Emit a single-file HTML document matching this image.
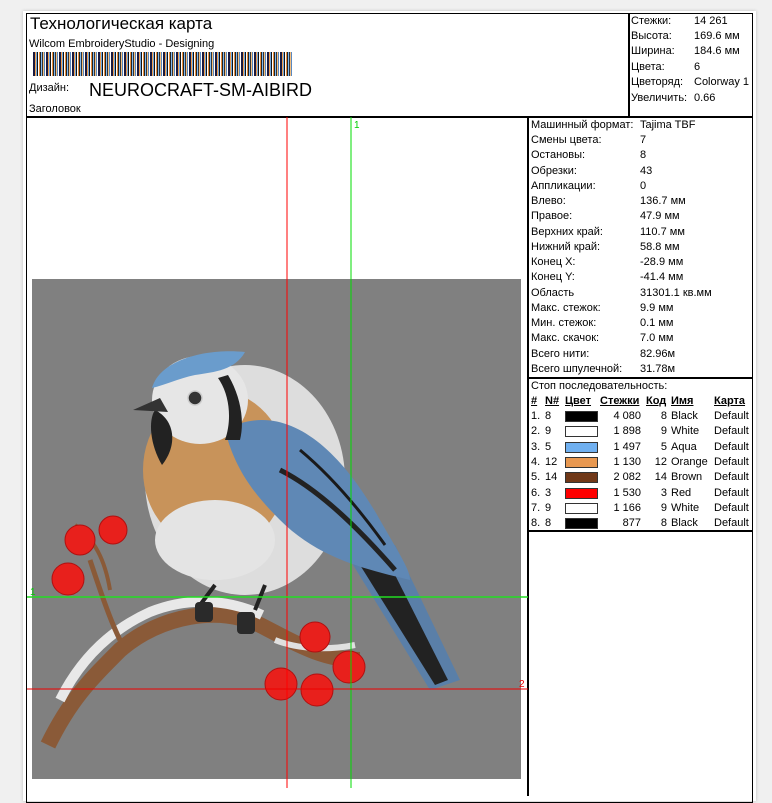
<!DOCTYPE html>
<html><head><meta charset="utf-8"><style>
*{margin:0;padding:0;box-sizing:border-box}
body{width:772px;height:788px;background:#f0f0f0;position:relative;overflow:hidden;font-family:"Liberation Sans",sans-serif;color:#000}
.page{position:absolute;left:23px;top:11px;width:733px;height:790px;background:#fff;box-shadow:0 0 3px #bbb}
.box{position:absolute;border:1.5px solid #000}
.t{position:absolute;font-size:11px;white-space:nowrap;line-height:13px}
.sw{position:absolute;left:565px;width:33px;height:11px;border:1px solid #333}
</style></head><body>
<div class="page"></div>
<div class="box" style="left:26px;top:13px;width:727px;height:790px"></div>
<div style="position:absolute;left:26px;top:116px;width:727px;height:1.5px;background:#000"></div>
<div style="position:absolute;left:628px;top:13px;width:1.5px;height:104px;background:#000"></div>
<div style="position:absolute;left:527px;top:116px;width:1.5px;height:680px;background:#000"></div>
<div style="position:absolute;left:527px;top:377px;width:226px;height:1.5px;background:#000"></div>
<div style="position:absolute;left:527px;top:530px;width:226px;height:1.5px;background:#000"></div>

<div class="t" style="left:30px;top:14px;font-size:17px;line-height:20px">Технологическая карта</div>
<div class="t" style="left:29px;top:38px">Wilcom EmbroideryStudio - Designing</div>
<div style="position:absolute;left:33px;top:52px;width:259px;height:24px;background:repeating-linear-gradient(90deg,#1a1a40 0 2px,#f0a050 2px 3px,#70a8e0 3px 4px,#111 4px 5px,#fff 5px 6px,#e89040 6px 7px,#222 7px 8px,#80b8f0 8px 9px,#333 9px 10px,#f4c080 10px 11px,#5a88c0 11px 12px,#fff 12px 13px)"></div>
<div class="t" style="left:29px;top:82px">Дизайн:</div>
<div class="t" style="left:89px;top:80px;font-size:18px;line-height:20px">NEUROCRAFT-SM-AIBIRD</div>
<div class="t" style="left:29px;top:103px">Заголовок</div>

<div class="t" style="left:631px;top:15px">Стежки:</div><div class="t" style="left:694px;top:15px">14 261</div>
<div class="t" style="left:631px;top:30px">Высота:</div><div class="t" style="left:694px;top:30px">169.6 мм</div>
<div class="t" style="left:631px;top:45px">Ширина:</div><div class="t" style="left:694px;top:45px">184.6 мм</div>
<div class="t" style="left:631px;top:61px">Цвета:</div><div class="t" style="left:694px;top:61px">6</div>
<div class="t" style="left:631px;top:76px">Цветоряд:</div><div class="t" style="left:694px;top:76px">Colorway 1</div>
<div class="t" style="left:631px;top:92px">Увеличить:</div><div class="t" style="left:694px;top:92px">0.66</div>

<div class="t" style="left:531px;top:119px">Машинный формат:</div><div class="t" style="left:640px;top:119px">Tajima TBF</div>
<div class="t" style="left:531px;top:134px">Смены цвета:</div><div class="t" style="left:640px;top:134px">7</div>
<div class="t" style="left:531px;top:149px">Остановы:</div><div class="t" style="left:640px;top:149px">8</div>
<div class="t" style="left:531px;top:165px">Обрезки:</div><div class="t" style="left:640px;top:165px">43</div>
<div class="t" style="left:531px;top:180px">Аппликации:</div><div class="t" style="left:640px;top:180px">0</div>
<div class="t" style="left:531px;top:195px">Влево:</div><div class="t" style="left:640px;top:195px">136.7 мм</div>
<div class="t" style="left:531px;top:210px">Правое:</div><div class="t" style="left:640px;top:210px">47.9 мм</div>
<div class="t" style="left:531px;top:226px">Верхних край:</div><div class="t" style="left:640px;top:226px">110.7 мм</div>
<div class="t" style="left:531px;top:241px">Нижний край:</div><div class="t" style="left:640px;top:241px">58.8 мм</div>
<div class="t" style="left:531px;top:256px">Конец X:</div><div class="t" style="left:640px;top:256px">-28.9 мм</div>
<div class="t" style="left:531px;top:271px">Конец Y:</div><div class="t" style="left:640px;top:271px">-41.4 мм</div>
<div class="t" style="left:531px;top:287px">Область</div><div class="t" style="left:640px;top:287px">31301.1 кв.мм</div>
<div class="t" style="left:531px;top:302px">Макс. стежок:</div><div class="t" style="left:640px;top:302px">9.9 мм</div>
<div class="t" style="left:531px;top:317px">Мин. стежок:</div><div class="t" style="left:640px;top:317px">0.1 мм</div>
<div class="t" style="left:531px;top:332px">Макс. скачок:</div><div class="t" style="left:640px;top:332px">7.0 мм</div>
<div class="t" style="left:531px;top:348px">Всего нити:</div><div class="t" style="left:640px;top:348px">82.96м</div>
<div class="t" style="left:531px;top:363px">Всего шпулечной:</div><div class="t" style="left:640px;top:363px">31.78м</div>

<div class="t" style="left:531px;top:380px">Стоп последовательность:</div>
<div class="t" style="left:531px;top:395px;text-decoration:underline;font-weight:bold">#</div>
<div class="t" style="left:545px;top:395px;text-decoration:underline;font-weight:bold">N#</div>
<div class="t" style="left:565px;top:395px;text-decoration:underline;font-weight:bold">Цвет</div>
<div class="t" style="left:600px;top:395px;text-decoration:underline;font-weight:bold">Стежки</div>
<div class="t" style="left:646px;top:395px;text-decoration:underline;font-weight:bold">Код</div>
<div class="t" style="left:671px;top:395px;text-decoration:underline;font-weight:bold">Имя</div>
<div class="t" style="left:714px;top:395px;text-decoration:underline;font-weight:bold">Карта</div>

<div id="rows"></div>
<script>
var d=[["1.","8","#000","4 080","8","Black"],["2.","9","#fff","1 898","9","White"],["3.","5","#70b0f0","1 497","5","Aqua"],["4.","12","#e89850","1 130","12","Orange"],["5.","14","#703818","2 082","14","Brown"],["6.","3","#ff0000","1 530","3","Red"],["7.","9","#fff","1 166","9","White"],["8.","8","#000","877","8","Black"]];
var h="";d.forEach(function(r,i){var y=410+i*15.3;
h+='<div class="t" style="left:531px;top:'+y+'px">'+r[0]+'</div><div class="t" style="left:545px;top:'+y+'px">'+r[1]+'</div><div class="sw" style="top:'+(y+1)+'px;background:'+r[2]+'"></div><div class="t" style="left:600px;width:41px;text-align:right;top:'+y+'px">'+r[3]+'</div><div class="t" style="left:646px;width:21px;text-align:right;top:'+y+'px">'+r[4]+'</div><div class="t" style="left:671px;top:'+y+'px">'+r[5]+'</div><div class="t" style="left:714px;top:'+y+'px">Default</div>';});
document.getElementById("rows").innerHTML=h;
</script>

<svg style="position:absolute;left:0;top:0" width="772" height="788">
<rect x="32" y="279" width="489" height="500" fill="#808080"/>
<!-- branch -->
<path d="M48,745 C70,700 90,680 120,650 C160,615 220,605 260,625 C290,640 320,660 360,660" stroke="#8a5a38" stroke-width="16" fill="none"/>
<path d="M60,700 C80,660 110,630 150,612 C190,596 230,600 262,615" stroke="#e8e8e8" stroke-width="10" fill="none"/>
<path d="M275,640 C300,650 330,650 355,645" stroke="#e0e0e0" stroke-width="6" fill="none"/>
<path d="M90,560 C100,590 110,620 120,640" stroke="#8a5a38" stroke-width="5" fill="none"/>
<path d="M75,525 C95,540 105,560 110,590" stroke="#8a5a38" stroke-width="4" fill="none"/>
<!-- tail -->
<path d="M350,560 L430,690 L460,680 L395,545 Z" fill="#5a7fa8"/>
<path d="M360,565 L435,685 L448,680 L385,555 Z" fill="#222"/>
<!-- body -->
<ellipse cx="245" cy="480" rx="100" ry="115" fill="#ddd"/>
<ellipse cx="215" cy="470" rx="72" ry="80" fill="#c8935a"/>
<ellipse cx="215" cy="540" rx="60" ry="40" fill="#e4e4e4"/>
<!-- wing -->
<path d="M225,430 C280,400 335,440 380,520 C400,555 410,570 410,580 C370,570 320,560 280,520 C255,495 235,470 225,430 Z" fill="#5f88b5"/>
<path d="M280,470 C320,490 360,530 395,570" stroke="#222" stroke-width="5" fill="none"/>
<path d="M300,450 C330,475 360,510 385,545" stroke="#1a1a1a" stroke-width="3" fill="none"/>
<!-- head -->
<ellipse cx="200" cy="400" rx="48" ry="44" fill="#e6e6e6"/>
<path d="M152,388 C160,360 205,348 245,352 C235,370 215,372 195,375 C180,378 165,385 152,388 Z" fill="#6a9ccc"/>
<path d="M155,410 C175,420 178,445 162,465 C150,445 148,420 155,410 Z" fill="#222"/>
<path d="M228,375 C240,395 245,420 240,440 L225,440 C232,420 230,395 218,378 Z" fill="#222"/>
<circle cx="195" cy="398" r="7" fill="#333" stroke="#ccc" stroke-width="1.5"/>
<path d="M133,410 L160,398 L168,412 Z" fill="#333"/>
<!-- feet -->
<path d="M215,585 L200,605 M265,585 L255,610" stroke="#222" stroke-width="4"/>
<rect x="195" y="602" width="18" height="20" rx="4" fill="#2a2a2a"/>
<rect x="237" y="612" width="18" height="22" rx="4" fill="#2a2a2a"/>
<!-- berries -->
<g fill="#e8201c" stroke="#b01010">
<circle cx="80" cy="540" r="15"/><circle cx="113" cy="530" r="14"/><circle cx="68" cy="579" r="16"/>
<circle cx="315" cy="637" r="15"/><circle cx="349" cy="667" r="16"/><circle cx="281" cy="684" r="16"/><circle cx="317" cy="690" r="16"/>
</g>
<line x1="287" y1="117" x2="287" y2="788" stroke="#f00" stroke-width="1"/>
<line x1="351" y1="117" x2="351" y2="788" stroke="#0d0" stroke-width="1"/>
<line x1="27" y1="597" x2="528" y2="597" stroke="#2d2" stroke-width="1.5"/>
<line x1="27" y1="689" x2="528" y2="689" stroke="#e00" stroke-width="1"/>
<text x="354" y="128" font-size="10" fill="#0c0" font-family="Liberation Sans">1</text>
<text x="30" y="595" font-size="10" fill="#0c0" font-family="Liberation Sans">1</text>
<text x="519" y="687" font-size="10" fill="#e00" font-family="Liberation Sans">2</text>
</svg>
</body></html>
